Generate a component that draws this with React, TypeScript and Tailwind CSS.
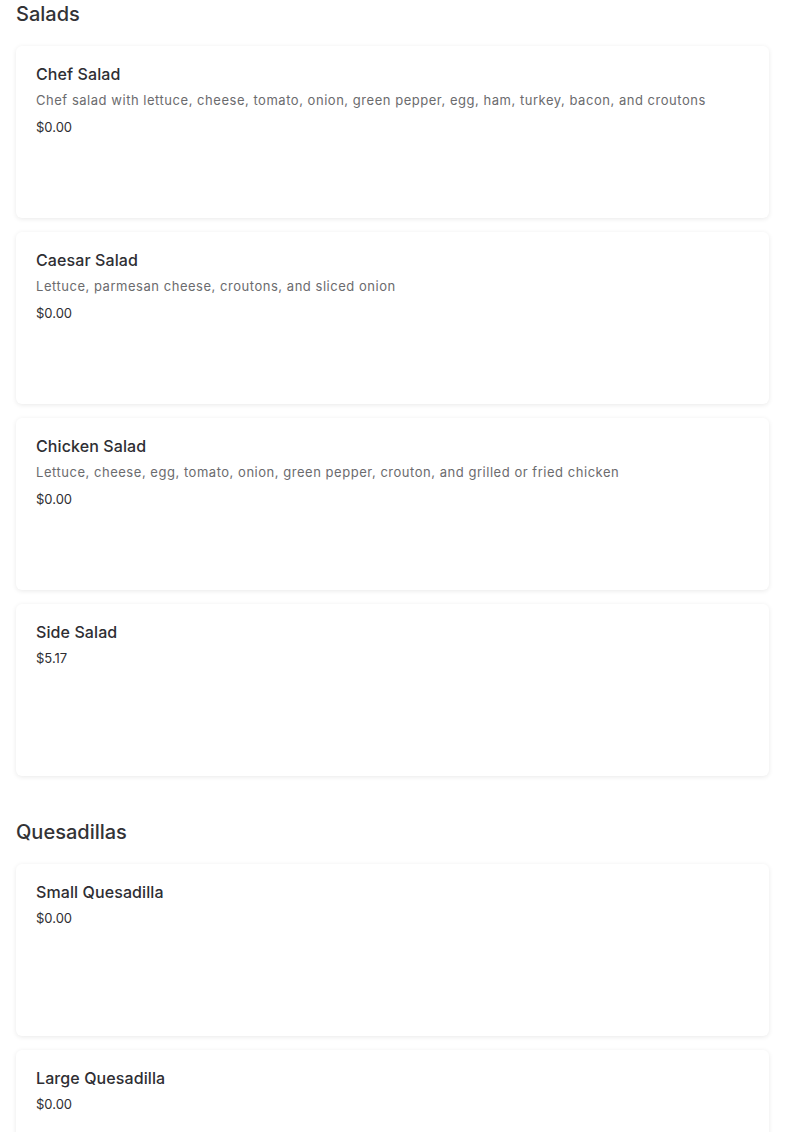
import React from 'react';

interface Item {
    name: string;
    description?: string;
    price: string;
}

interface Section {
    title: string;
    items: Item[];
}

const sections: Section[] = [
    {
        title: 'Salads',
        items: [
            {
                name: 'Chef Salad',
                description:
                    'Chef salad with lettuce, cheese, tomato, onion, green pepper, egg, ham, turkey, bacon, and croutons',
                price: '$0.00',
            },
            {
                name: 'Caesar Salad',
                description: 'Lettuce, parmesan cheese, croutons, and sliced onion',
                price: '$0.00',
            },
            {
                name: 'Chicken Salad',
                description:
                    'Lettuce, cheese, egg, tomato, onion, green pepper, crouton, and grilled or fried chicken',
                price: '$0.00',
            },
            { name: 'Side Salad', price: '$5.17' },
        ],
    },
    {
        title: 'Quesadillas',
        items: [
            { name: 'Small Quesadilla', price: '$0.00' },
            { name: 'Large Quesadilla', price: '$0.00' },
        ],
    },
];

function MenuCard({ item }: { item: Item }) {
    return (
        <div className="h-[172px] rounded-md bg-white px-5 pt-[16px] shadow-[0_1px_5px_rgba(0,0,0,0.09)]">
            <h3 className="text-[16px] leading-[24px] font-medium tracking-[0.1px] text-[#2e2e33]">
                {item.name}
            </h3>
            {item.description && (
                <p className="mt-[4px] mb-[7px] text-[13px] leading-[20px] tracking-[0.53px] text-[#6b6b6e]">
                    {item.description}
                </p>
            )}
            <p className="mt-[4px] text-[13px] leading-[20px] text-[#2e2e33]">{item.price}</p>
        </div>
    );
}

export default function App() {
    return (
        <div
            className="min-h-screen bg-white px-4"
            style={{ fontFamily: 'Inter, "Noto Sans", sans-serif' }}
        >
            {sections.map((section, i) => (
                <section key={section.title} className={i === 0 ? '' : 'mt-[42px]'}>
                    <h2 className="text-[20px] leading-[28px] font-medium text-[#333336]">
                        {section.title}
                    </h2>
                    <div className="mt-[18px] flex flex-col gap-[14px]">
                        {section.items.map((item) => (
                            <MenuCard key={item.name} item={item} />
                        ))}
                    </div>
                </section>
            ))}
        </div>
    );
}
